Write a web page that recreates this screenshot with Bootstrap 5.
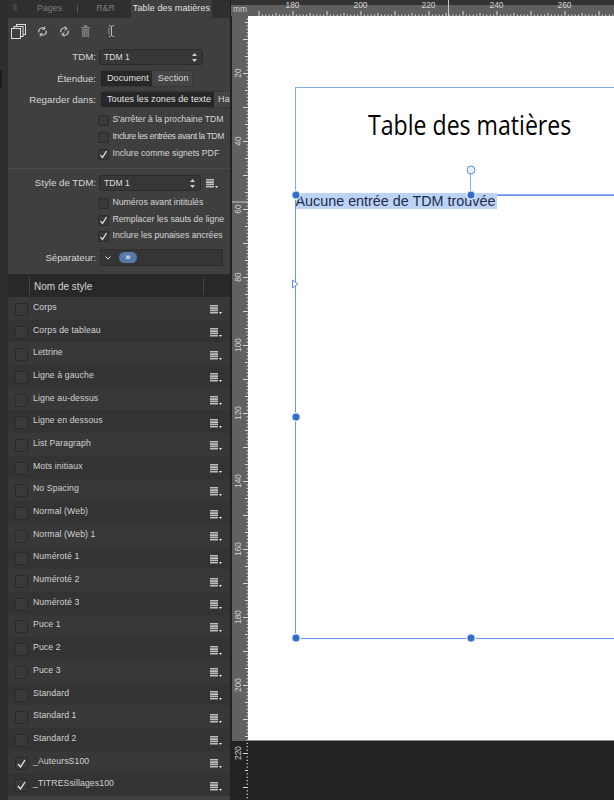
<!DOCTYPE html>
<html lang="fr"><head><meta charset="utf-8"><title>Table des matières</title>
<link href="https://cdn.jsdelivr.net/npm/bootstrap@5.3.0/dist/css/bootstrap.min.css" rel="stylesheet">
<style>
html,body{height:800px;overflow:hidden;background:#222}
body{font-family:"Liberation Sans",Arial,sans-serif;color:#d8d8d8;font-size:9.5px}
.stage{width:614px;height:800px;overflow:hidden}
.sidegutter{width:8px;background:#2e2e2e;flex:none}
.gutmark{width:2px;height:18px;margin-top:70px;background:#1c1c1c}
.panel{width:222px;flex:none;background:#3f3f3f}
.divider{width:1px;background:#1f1f1f;flex:none}
.tabbar{height:18px;background:#2f2f2f;flex:none}
.tabitem{height:18px;line-height:17px;color:#7e7e7e;font-size:8.7px;letter-spacing:.1px;white-space:nowrap}
.tabitem.on{background:#3f3f3f;color:#e0e0e0;width:81px;text-align:center;position:absolute;left:131px;font-size:9px}
.grip{width:29px;padding-left:5px;color:#5c5c5c}
.tabsep{width:1px;height:8px;background:#565656;margin:5px 18px 0 15px}
.toolrow{height:26px;padding-left:3px;gap:11px;flex:none}
.cursoricon{margin-left:7px}
.formrow{display:flex;align-items:center;flex:none}
.m-tdm{margin-top:5px}.m-ete{margin-top:5px}.m-reg{margin-top:4px}.m-style{margin-top:6px}.m-sep{margin-top:5px}
.lbl{width:91px;flex:none;text-align:right;padding:1px 3px 0 0;font-size:9.7px;color:#d6d6d6;white-space:nowrap}
.sel{width:104px;height:16px;border:1px solid #2b2b2b;border-radius:3px;background:#373737;display:flex;align-items:center;justify-content:space-between;padding:0 5px 0 4px;font-size:8.6px;color:#ddd;flex:none}
.sel.narrow{width:102px}
.menu-after{margin-left:5px}
.seg{display:flex;height:17px;background:#454545;border-radius:2px;border:1px solid #383838;overflow:hidden;align-items:stretch;font-size:9px;letter-spacing:.1px;margin-left:1px}
.seg span{display:flex;align-items:center;padding:0 3px 0 6px;white-space:nowrap}
.seg .on{background:#272727;color:#e4e4e4}
.seg .tail{padding:0 0 0 4px}
.seg.wide{width:130px;border-right:0;border-radius:2px 0 0 2px}
.chkrow{display:flex;align-items:center;padding-left:90px;gap:3.5px;font-size:8.7px;color:#d6d6d6;white-space:nowrap;height:17px;flex:none}
.chkrow.tight{letter-spacing:-.42px}
.chkrow.h16{height:16px}
.m-chk1{margin-top:3.5px}.m-chk2{margin-top:4px}.m-chk3{margin-top:1px}
.box{width:11px;height:11px;border:1px solid #2c2c2c;border-radius:2px;background:#393939;flex:none;display:flex;align-items:center;justify-content:center}
.sepline{height:1px;background:#4b4b4b;margin-top:5.5px;flex:none}
.sepfield{width:123px;height:17px;background:#353535;border:1px solid #2d2d2d;flex:none;display:flex;align-items:center;padding-left:4px;gap:8px;margin-left:1px}
.pill{width:18px;height:11px;border-radius:6px;background:#5878a8;color:#e6edf7;font-size:9.5px;font-weight:700;line-height:9px;text-align:center}
.listhead{height:23px;background:#282828;font-size:10px;color:#d4d4d4;margin-top:8px;flex:none}
.headbar{width:1px;height:18px;background:#444}
.headbar.first{margin-left:21px}
.headname{margin-left:4px;width:169px;padding-top:1px}
.stylerow{height:22.7px;padding-left:7px;font-size:8.7px;letter-spacing:.1px;color:#d2d2d2}
.stylerow:nth-child(odd){background:#383838}
.stylerow:nth-child(even){background:#333}
.stylerow .box{width:13px;height:13px;background:#393939;border-color:#2b2b2b;margin-right:5px;margin-top:2px}
.rowname{padding-bottom:2px}
.menuicon{margin-left:auto;margin-right:8px;margin-top:3px}
.work{width:383px;flex:none;position:relative;background:#222}
.rtop{position:absolute;left:0;top:0;right:0;height:16px;background:#5f5f5f}
.rtop-band{position:absolute;left:0;top:0;right:0;height:5px;background:#323232}
.rleft{position:absolute;left:1px;top:16px;width:16px;height:784px;background:#222}
.rleft-grey{position:absolute;left:0;top:0;width:16px;height:725px;background:#616161}
.rnum{position:absolute;color:#d4d4d4;font-size:8.4px;line-height:8px}
.rnum.h{top:1px}
.rnum.mm{left:2px;top:5px}
.rnum.v{transform:translate(-50%,-50%) rotate(-90deg);left:7px}
.page{position:absolute;left:17px;top:16px;width:366px;height:725px;background:#fff;border-bottom:1px solid #8a8a8a}
.frame{position:absolute;left:64px;top:87px;width:319px;height:108px;border:1px solid #86ace6;border-right:0}
.frame2{position:absolute;left:64px;top:195px;width:319px;height:444px;border:1px solid #669ae8;border-right:0}
.doctitle{position:absolute;left:137px;top:108px;white-space:nowrap;color:#000;font-family:"Open Sans",sans-serif;font-weight:500;font-size:28px;line-height:32px;transform:scaleX(.825);transform-origin:left top}
.hit{position:absolute;left:64.5px;top:193px;height:16px;background:#bcd3f3;color:#1c2c4c;font-size:14.35px;line-height:16px;padding-right:2px;white-space:nowrap}
.handle{position:absolute;width:7px;height:7px;border-radius:50%;background:#2f6ecb;box-shadow:0 0 0 1.5px #e8eef8;transform:translate(-50%,-50%)}
.hx1{left:64.5px}.hx2{left:239.5px}.hy1{top:195px}.hy2{top:417px}.hy3{top:638px}
.rothandle{position:absolute;left:239.5px;top:170px;width:9px;height:9px;border-radius:50%;background:#e8f0fc;border:1px solid #5f92de;transform:translate(-50%,-50%)}
.rotline{position:absolute;left:239px;top:174px;width:1px;height:21px;background:#8cb0e6}
.flowtri{position:absolute;left:61px;top:279px}
</style></head><body>
<div class="stage d-flex">
 <div class="sidegutter"><div class="gutmark"></div></div>
 <div class="panel d-flex flex-column">
  <div class="tabbar d-flex align-items-start">
   <div class="tabitem grip">ll</div>
   <div class="tabitem">Pages</div>
   <div class="tabsep"></div>
   <div class="tabitem">R&amp;R</div>
   <div class="tabitem on">Table des matières</div>
  </div>
  <div class="toolrow d-flex align-items-center">
   <svg width="15" height="15" viewBox="0 0 15 15" fill="none" stroke="#dcdcdc"><rect x="5.500" y=".5" width="9" height="10" fill="#3f3f3f"/><rect x="3" y="2.500" width="9" height="10" fill="#3f3f3f"/><rect x=".5" y="4.500" width="9" height="10" fill="#3f3f3f"/></svg>
   <svg width="11" height="11" viewBox="0 0 12 12" fill="none" stroke="#cfcfcf" stroke-width="1.200"><path d="M2 7a4 4 0 0 1 6.500-4M10 5a4 4 0 0 1-6.500 4"/><path d="M8.500 .5v3h-3M3.500 11.500v-3h3" stroke-width="1"/></svg>
   <svg width="11" height="11" viewBox="0 0 12 12" fill="none" stroke="#cfcfcf" stroke-width="1.200"><path d="M2 7a4 4 0 0 1 6.500-4M10 5a4 4 0 0 1-6.500 4"/><path d="M6 .5l3 2.500-3 2M6 11.500L3 9l3-2" stroke-width="1"/></svg>
   <svg width="9" height="12" viewBox="0 0 10 13" fill="#7c7c7c"><rect x="0" y="2" width="10" height="1.500"/><rect x="3" y="0" width="4" height="2"/><path d="M1 4h8v9H1z"/><path d="M3 5v7M5 5v7M7 5v7" stroke="#555" stroke-width=".7"/></svg>
   <svg class="cursoricon" width="7" height="12" viewBox="0 0 8 13" fill="none" stroke="#cfcfcf"><path d="M1 .5h2l1 1 1-1h2M1 12.500h2l1-1 1 1h2M4 1.500v10"/><rect x=".5" y="3.500" width="1.500" height="6" stroke="#888" stroke-width=".7"/></svg>
  </div>
  <div class="formrow m-tdm"><div class="lbl">TDM:</div><div class="sel">TDM 1<svg width="5" height="9" viewBox="0 0 5 9" fill="#cfcfcf"><path d="M2.500 0L5 3H0zM2.500 9L0 6h5z"/></svg></div></div>
  <div class="formrow m-ete"><div class="lbl">Étendue:</div><div class="seg"><span class="on">Document</span><span>Section</span></div></div>
  <div class="formrow m-reg"><div class="lbl">Regarder dans:</div><div class="seg wide"><span class="on">Toutes les zones de texte</span><span class="tail">Ha</span></div></div>
  <div class="chkrow m-chk1"><span class="box"></span>S'arrêter à la prochaine TDM</div>
  <div class="chkrow tight"><span class="box"></span>Inclure les entrées avant la TDM</div>
  <div class="chkrow"><span class="box"><svg width="9" height="9" viewBox="0 0 9 9" fill="none" stroke="#eee" stroke-width="1.200"><path d="M1.500 5l2 2.500L7.500 1"/></svg></span>Inclure comme signets PDF</div>
  <div class="sepline"></div>
  <div class="formrow m-style"><div class="lbl">Style de TDM:</div><div class="sel narrow">TDM 1<svg width="5" height="9" viewBox="0 0 5 9" fill="#cfcfcf"><path d="M2.500 0L5 3H0zM2.500 9L0 6h5z"/></svg></div>
   <svg class="menu-after" width="12" height="9" viewBox="0 0 12 9" fill="#bdbdbd"><path d="M0 0h8v1.600H0zM0 2.300h8v1.600H0zM0 4.600h8v1.600H0zM0 6.900h8v1.600H0z"/><path d="M9 7h3l-1.500 2z" fill="#eee"/></svg></div>
  <div class="chkrow h16 m-chk2"><span class="box"></span>Numéros avant intitulés</div>
  <div class="chkrow h16 m-chk3"><span class="box"><svg width="9" height="9" viewBox="0 0 9 9" fill="none" stroke="#eee" stroke-width="1.200"><path d="M1.500 5l2 2.500L7.500 1"/></svg></span>Remplacer les sauts de ligne</div>
  <div class="chkrow h16"><span class="box"><svg width="9" height="9" viewBox="0 0 9 9" fill="none" stroke="#eee" stroke-width="1.200"><path d="M1.500 5l2 2.500L7.500 1"/></svg></span>Inclure les punaises ancrées</div>
  <div class="formrow m-sep"><div class="lbl">Séparateur:</div><div class="sepfield"><svg width="6" height="4" viewBox="0 0 6 4" fill="none" stroke="#ddd"><path d="M.5.500L3 3l2.500-2.500"/></svg><span class="pill">»</span></div></div>
  <div class="listhead d-flex align-items-center">
   <div class="headbar first"></div>
   <div class="headname">Nom de style</div>
   <div class="headbar"></div>
  </div>
  <div id="rows"></div>
 </div>
 <div class="divider"></div>
 <div class="work" id="work">
  <div class="rtop"><div class="rtop-band"></div><span class="rnum mm">mm</span></div>
  <div class="rleft"><div class="rleft-grey"></div></div>
  <div class="page"></div>
  <svg id="ticks" class="position-absolute top-0 start-0" width="383" height="800"></svg>
  <div class="frame"></div><div class="frame2"></div>
  <div class="doctitle">Table des matières</div>
  <div class="hit">Aucune entrée de TDM trouvée</div>
  <div class="rotline"></div><div class="rothandle"></div>
  <svg class="flowtri" width="7" height="10" viewBox="0 0 7 10" fill="#fff" stroke="#5b90e0"><path d="M.5 1v8L6 5z"/></svg>
  <div class="handle hx1 hy1"></div><div class="handle hx2 hy1"></div>
  <div class="handle hx1 hy2"></div>
  <div class="handle hx1 hy3"></div><div class="handle hx2 hy3"></div>
 </div>
</div>
<script>
var names=["Corps","Corps de tableau","Lettrine","Ligne à gauche","Ligne au-dessus","Ligne en dessous","List Paragraph","Mots initiaux","No Spacing","Normal (Web)","Normal (Web) 1","Numéroté 1","Numéroté 2","Numéroté 3","Puce 1","Puce 2","Puce 3","Standard","Standard 1","Standard 2","_AuteursS100","_TITRESsillages100"];
document.getElementById('rows').innerHTML=names.map(function(n){
 var c=n[0]=='_';
 return '<div class="stylerow d-flex align-items-center"><span class="box">'+(c?'<svg width="11" height="11" viewBox="0 0 11 11" fill="none" stroke="#f0f0f0" stroke-width="1.300"><path d="M2 6l2.500 3L9 2"/></svg>':'')+'</span><span class="rowname">'+n+'</span><svg class="menuicon" width="12" height="9" viewBox="0 0 12 9" fill="#bdbdbd"><path d="M0 0h8v1.600H0zM0 2.300h8v1.600H0zM0 4.600h8v1.600H0zM0 6.900h8v1.600H0z"/><path d="M9 7h3l-1.500 2z" fill="#eee"/></svg></div>';
}).join('');
var w=document.getElementById('work'),s='';
for(var m=170;m<=280;m++){var x=61.5+(m-180)*3.4,h=m%10==0?5:(m%5==0?3:1.500);if(x>=17&&x<383)s+='<rect x="'+x.toFixed(1)+'" y="'+(16-h)+'" width="1" height="'+h+'" fill="#d8d8d8"/>';
 if(m%20==0&&m>=180&&m<=260){var e=document.createElement('span');e.className='rnum h';e.style.left=(x-7)+'px';e.textContent=m;w.querySelector('.rtop').appendChild(e);}}
for(var v=0;v<=236;v++){var y=5+v*3.4,hh=v%10==0?5:(v%5==0?3:1.500);if(y>=16&&y<=800)s+='<rect x="'+(17-hh)+'" y="'+y.toFixed(1)+'" width="'+hh+'" height="1" fill="#d8d8d8"/>';
 if(v%20==0&&v>0&&v<=220){var e2=document.createElement('span');e2.className='rnum v';e2.style.top=y+'px';e2.textContent=v;w.appendChild(e2);}}
s+='<rect x="217" y="0" width="1" height="16" fill="#c9c9c9"/><rect x="1" y="201.500" width="16" height="1" fill="#c9c9c9"/>';
document.getElementById('ticks').innerHTML=s;
</script>
<script src="https://cdn.jsdelivr.net/npm/bootstrap@5.3.0/dist/js/bootstrap.bundle.min.js"></script>
</body></html>
